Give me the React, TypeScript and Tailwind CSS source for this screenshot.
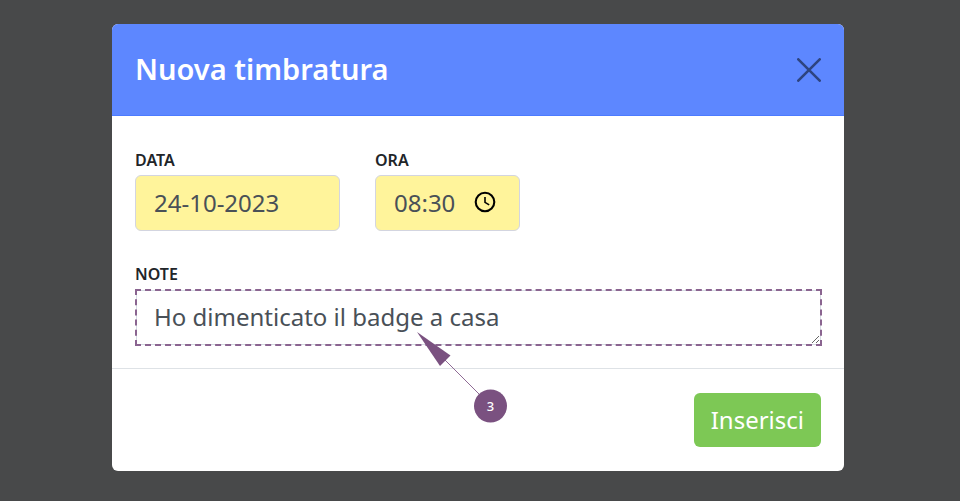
import { useState } from "react";

function ClockIcon() {
    return (
        <svg viewBox="0 0 24 24" className="h-6 w-6" fill="none" stroke="#000000" aria-hidden="true">
            <circle cx="12" cy="12" r="9.3" strokeWidth="2.1" />
            <path d="M12 7v5.4l4.2 2.5" strokeWidth="1.6" />
        </svg>
    );
}

function CloseIcon() {
    return (
        <svg viewBox="0 0 24 24" className="h-6 w-6" fill="none" stroke="#2e4480" strokeWidth="2.6" strokeLinecap="round" aria-hidden="true">
            <path d="M1.3 1.3l21.4 21.4M22.7 1.3L1.3 22.7" />
        </svg>
    );
}

function StepMarker() {
    return (
        <svg
            viewBox="0 0 92 92"
            className="pointer-events-none absolute left-[282px] top-[43px] h-[92px] w-[92px]"
            role="img"
            aria-label="3"
        >
            <path d="M28 28l36 36" stroke="#8f6b95" strokeWidth="1" />
            <path d="M0 0l33.5 23.5-10.5 10.5z" fill="#7a5180" />
            <circle cx="73.5" cy="74" r="16.5" fill="#7a5180" />
            <text x="73.5" y="79" textAnchor="middle" fontSize="13" fontWeight="500" fill="#ffffff">
                3
            </text>
        </svg>
    );
}

const labelClass = "text-base leading-6 font-semibold uppercase text-[#212529]";

export default function App() {
    const [date, setDate] = useState("24-10-2023");
    const [time, setTime] = useState("08:30");
    const [notes, setNotes] = useState("Ho dimenticato il badge a casa");

    return (
        <div className="min-h-screen bg-[#48494a] py-6 pl-[112px] pr-[116px] font-['Noto_Sans',sans-serif]">
            <form
                role="dialog"
                aria-labelledby="dialog-title"
                className="rounded-md bg-white"
                onSubmit={(e) => e.preventDefault()}
            >
                <div className="flex items-center justify-between rounded-t-md border-b border-[#4c7bff] bg-[#5d87ff] px-[23px] py-6">
                    <h1 id="dialog-title" className="pb-0.5 text-[29px] leading-[41px] font-semibold text-white">
                        Nuova timbratura
                    </h1>
                    <button type="button" aria-label="Chiudi">
                        <CloseIcon />
                    </button>
                </div>

                <div className="pt-8 pr-[22px] pb-[22px] pl-[23px]">
                    <div className="flex gap-[35px]">
                        <div className="flex w-[205px] flex-col gap-[3px]">
                            <label htmlFor="date" className={labelClass}>Data</label>
                            <input
                                id="date"
                                type="text"
                                value={date}
                                onChange={(e) => setDate(e.target.value)}
                                className="h-14 w-full rounded-md border border-[#d3d5e0] bg-[#fff49b] px-[18px] pb-0.5 text-2xl text-[#495057]"
                            />
                        </div>
                        <div className="flex w-[145px] flex-col gap-[3px]">
                            <label htmlFor="time" className={labelClass}>Ora</label>
                            <div className="flex h-14 items-center justify-between rounded-md border border-[#d3d5e0] bg-[#fff49b] pr-[22px] pl-[18px]">
                                <input
                                    id="time"
                                    type="text"
                                    value={time}
                                    onChange={(e) => setTime(e.target.value)}
                                    className="w-[70px] bg-transparent text-2xl text-[#495057]"
                                />
                                <button type="button" aria-label="Scegli ora" className="pb-0.5">
                                    <ClockIcon />
                                </button>
                            </div>
                        </div>
                    </div>

                    <div className="mt-[31px] flex flex-col gap-[3px]">
                        <label htmlFor="notes" className={labelClass}>Note</label>
                        <div className="relative p-px">
                            <textarea
                                id="notes"
                                rows={1}
                                value={notes}
                                onChange={(e) => setNotes(e.target.value)}
                                className="block h-[55px] w-full resize-y overflow-hidden border border-[#d5dbe3] px-[17px] py-2 text-2xl leading-9 text-[#495057] outline-2 -outline-offset-1 outline-dashed outline-[#8a6490]"
                            />
                            <StepMarker />
                        </div>
                    </div>
                </div>

                <div className="flex justify-end border-t border-[#dee2e6] py-6 pr-[23px] pl-6">
                    <button type="submit" className="h-[54px] rounded-md bg-[#7dc855] px-[17px] text-2xl text-white">
                        Inserisci
                    </button>
                </div>
            </form>
        </div>
    );
}
